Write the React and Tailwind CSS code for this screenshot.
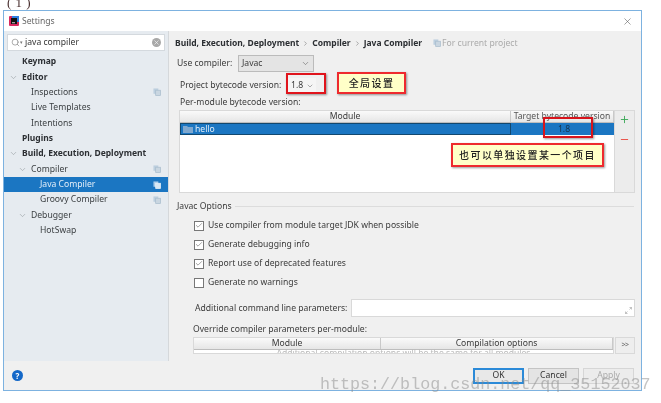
import { ChevronDown, X, Plus, Minus, Check, Search, ChevronRight } from 'lucide-react';

const tree = [
  { label: 'Keymap', bold: true, indent: 22 },
  { label: 'Editor', bold: true, indent: 22, arrow: 9 },
  { label: 'Inspections', indent: 31, copy: true },
  { label: 'Live Templates', indent: 31 },
  { label: 'Intentions', indent: 31 },
  { label: 'Plugins', bold: true, indent: 22 },
  { label: 'Build, Execution, Deployment', bold: true, indent: 22, arrow: 9 },
  { label: 'Compiler', indent: 31, arrow: 18, copy: true },
  { label: 'Java Compiler', indent: 40, copy: true, selected: true },
  { label: 'Groovy Compiler', indent: 40, copy: true },
  { label: 'Debugger', indent: 31, arrow: 18 },
  { label: 'HotSwap', indent: 40 },
];

const options = [
  { label: 'Use compiler from module target JDK when possible', checked: true },
  { label: 'Generate debugging info', checked: true },
  { label: 'Report use of deprecated features', checked: true },
  { label: 'Generate no warnings', checked: false },
];

function CopyIcon({ light }) {
  return (
    <svg width="8" height="8" viewBox="0 0 9 9" className="shrink-0">
      <rect x="0.5" y="0.5" width="5.5" height="6" fill={light ? '#a9cbe8' : '#bccfdf'} />
      <rect x="3" y="2.5" width="5.5" height="6" fill={light ? '#d7e8f5' : '#c9d6e1'} stroke={light ? '#e8f2fa' : '#a8bccd'} strokeWidth="0.8" />
    </svg>
  );
}

function TreeRow({ row }) {
  return (
    <div
      className={`relative flex h-[15.36px] items-center pr-[7px] ${row.selected ? 'bg-[#1b76c2] text-[#e3eef8]' : 'text-[#3c4043]'}`}
      style={{ paddingLeft: row.indent - 4 }}
    >
      {row.arrow && (
        <ChevronDown size={9} strokeWidth={1.4} className="absolute text-[#8b9196]" style={{ left: row.arrow - 4 }} />
      )}
      <span className={`flex-1 whitespace-nowrap ${row.bold ? 'text-[8.5px] font-bold text-[#2c2f33]' : ''}`}>{row.label}</span>
      {row.copy && <CopyIcon light={row.selected} />}
    </div>
  );
}

function OptionRow({ option }) {
  return (
    <div className="flex h-[19px] items-center gap-[4px]">
      <span className="flex h-[10px] w-[10px] items-center justify-center border border-[#777] bg-white">
        {option.checked && <Check size={9} strokeWidth={1.5} className="text-[#444]" />}
      </span>
      <span className="whitespace-nowrap">{option.label}</span>
    </div>
  );
}

function HeaderCell({ className, children }) {
  return (
    <div className={`flex items-center justify-center overflow-hidden whitespace-nowrap border-r border-[#c9c9c9] bg-gradient-to-b from-[#fafafa] to-[#e6e6e6] ${className}`}>
      {children}
    </div>
  );
}

export default function App() {
  return (
    <div className="relative h-[403px] w-[661px] overflow-hidden bg-white font-['Noto_Sans','Noto_Sans_CJK_SC',sans-serif] text-[8.6px] text-[#3a3a3a] blur-[0.4px]">
      <div className="h-[10px] overflow-hidden pl-[7px] font-['Liberation_Serif',serif] text-[13px] leading-[5px] tracking-[0.5px] text-[#4a3030]">( 1 )</div>

      {/* dialog */}
      <div className="ml-[3px] flex h-[381px] w-[639px] flex-col border border-[#7db2e0] bg-[#f0f0f0]">
        <div className="flex h-[20px] items-center bg-white pl-[5px] pr-[8px]">
          <svg width="10" height="10" viewBox="0 0 10 10" className="mr-[3px]">
            <rect width="10" height="10" rx="1" fill="#d8285f" />
            <rect x="3" y="0" width="7" height="6" fill="#2b7de0" />
            <rect x="2" y="2" width="6" height="6" fill="#111" />
            <rect x="3" y="6.4" width="3" height="0.8" fill="#fff" />
          </svg>
          <span className="flex-1 text-[#666]">Settings</span>
          <X size={11} strokeWidth={1.2} className="text-[#555]" />
        </div>

        <div className="flex min-h-0 flex-1">
          {/* sidebar */}
          <div className="flex w-[165px] shrink-0 flex-col border-r border-[#d5d8db] bg-[#e6ebf0]">
            <div className="mx-[3px] mt-[3px] flex h-[17px] items-center border border-[#d4d9de] bg-white px-[3px]">
              <Search size={9} strokeWidth={1.6} className="text-[#777]" />
              <span className="mr-[2px] text-[5px] text-[#777]">▾</span>
              <span className="flex-1 text-[#333]">java compiler</span>
              <span className="flex h-[9px] w-[9px] items-center justify-center rounded-full bg-[#a8a8a8]">
                <X size={7} strokeWidth={2} className="text-white" />
              </span>
            </div>
            <div className="mt-[3px]">
              {tree.map((row) => (
                <TreeRow key={row.label} row={row} />
              ))}
            </div>
          </div>

          {/* main */}
          <div className="flex min-w-0 flex-1 flex-col pl-[6px] pr-[6px]">
            <div className="flex h-[23px] items-center pt-[2px] text-[8.5px] font-bold text-[#2c2f33]">
              <span className="whitespace-nowrap">Build, Execution, Deployment</span>
              <ChevronRight size={7} className="mx-[3px] text-[#777]" />
              <span>Compiler</span>
              <ChevronRight size={7} className="mx-[3px] text-[#777]" />
              <span className="whitespace-nowrap">Java Compiler</span>
              <span className="ml-[11px] flex items-center gap-[1px] whitespace-nowrap text-[8.6px] font-normal text-[#aaa]">
                <CopyIcon />
                For current project
              </span>
            </div>

            <div className="flex h-[18px] items-center pl-[2px]">
              <span className="w-[61px]">Use compiler:</span>
              <div className="flex h-[17px] w-[76px] items-center justify-between border border-[#bbb] bg-[#e4e4e4] pl-[3px] pr-[3px]">
                <span>Javac</span>
                <ChevronDown size={9} strokeWidth={1.4} className="text-[#555]" />
              </div>
            </div>

            <div className="mt-[5px] flex h-[17px] items-center pl-[5px]">
              <span className="w-[108px] whitespace-nowrap">Project bytecode version:</span>
              <div className="flex h-[15px] w-[28px] items-center justify-between bg-[#f5f5f5] pl-[3px] pr-[2px]">
                <span>1.8</span>
                <ChevronDown size={8} strokeWidth={1.4} className="text-[#555]" />
              </div>
            </div>

            <div className="flex h-[16px] items-center pl-[5px]">Per-module bytecode version:</div>

            {/* module table */}
            <div className="ml-[4px] flex h-[83px] w-[456px] border border-[#d9d9d9]">
              <div className="flex min-w-0 flex-1 flex-col bg-white">
                <div className="flex h-[12px] border-b border-[#bdbdbd]">
                  <HeaderCell className="w-[331px]">Module</HeaderCell>
                  <HeaderCell className="flex-1 text-[#555]">Target bytecode version</HeaderCell>
                </div>
                <div className="flex h-[12px] bg-[#1b76c2] text-[#e3eef8]">
                  <div className="flex w-[331px] items-center gap-[2px] border border-[#12486f] pl-[2px]">
                    <svg width="10" height="8" viewBox="0 0 10 8">
                      <path d="M0 1h4l1 1h5v6H0z" fill="#7fa8cf" />
                    </svg>
                    hello
                  </div>
                  <div className="flex flex-1 items-center justify-center pl-[3px] text-[#16334d]">1.8</div>
                </div>
              </div>
              <div className="flex w-[20px] flex-col items-center border-l border-[#d9d9d9] bg-[#ececec] pt-[3px]">
                <Plus size={11} strokeWidth={2} className="text-[#3aa757]" />
                <Minus size={11} strokeWidth={2} className="mt-[9px] text-[#e8483e]" />
              </div>
            </div>

            {/* javac options */}
            <div className="mt-[7px] flex h-[12px] items-center gap-[3px] pl-[2px]">
              <span className="whitespace-nowrap">Javac Options</span>
              <div className="mr-[1px] h-px flex-1 bg-[#dcdcdc]" />
            </div>
            <div className="mt-[4px] pl-[19px]">
              {options.map((option) => (
                <OptionRow key={option.label} option={option} />
              ))}
            </div>

            <div className="mt-[7px] flex h-[18px] items-center pl-[20px]">
              <span className="w-[156px] whitespace-nowrap">Additional command line parameters:</span>
              <div className="relative h-[18px] flex-1 border border-[#d9d9d9] bg-white">
                <svg width="7" height="7" viewBox="0 0 7 7" className="absolute bottom-[2px] right-[2px] text-[#aaa]">
                  <path d="M0.5 6.5L2.5 4.5M6.5 0.5L4.5 2.5M4.5 0.5h2v2M0.5 4.5v2h2" stroke="currentColor" fill="none" strokeWidth="0.7" />
                </svg>
              </div>
            </div>

            <div className="mt-[4px] flex h-[16px] items-center pl-[18px]">Override compiler parameters per-module:</div>

            <div className="ml-[18px] flex h-[17px]">
              <div className="w-[421px] overflow-hidden border border-[#d9d9d9] bg-white">
                <div className="flex h-[12px] border-b border-[#bdbdbd]">
                  <HeaderCell className="w-[187px]">Module</HeaderCell>
                  <HeaderCell className="flex-1">Compilation options</HeaderCell>
                </div>
                <div className="whitespace-nowrap text-center leading-[7px] text-[#bbb]">Additional compilation options will be the same for all modules</div>
              </div>
              <div className="ml-[1px] flex w-[20px] items-center justify-center border border-[#d9d9d9] bg-[#eeeeee] text-[7px] tracking-[-0.5px] text-[#666]">{'>>'}</div>
            </div>
          </div>
        </div>

        {/* footer */}
        <div className="flex h-[29px] shrink-0 items-center bg-[#f0f0f0] pl-[8px] pr-[7px]">
          <span className="flex h-[11px] w-[11px] items-center justify-center rounded-full bg-[#1468c8] text-[8px] font-bold leading-none text-white">?</span>
          <div className="ml-auto flex gap-[4px]">
            <div className="flex h-[16px] w-[51px] items-center justify-center border-2 border-[#2b8ad8] bg-[#e8e8e8] text-[#333]">OK</div>
            <div className="flex h-[16px] w-[51px] items-center justify-center border border-[#c4c4c4] bg-[#e4e4e4] text-[#333]">Cancel</div>
            <div className="flex h-[16px] w-[51px] items-center justify-center border border-[#d6d6d6] bg-[#ececec] text-[#aaa]">Apply</div>
          </div>
        </div>
      </div>

      {/* annotations drawn over the screenshot */}
      <div className="absolute left-[286px] top-[73px] h-[21px] w-[40px] border-2 border-[#e0141c] shadow-[1px_1px_2px_rgba(0,0,0,0.4)]" />
      <div className="absolute left-[543px] top-[117px] h-[21px] w-[50px] border-2 border-[#d8141c] shadow-[1px_1px_2px_rgba(0,0,0,0.4)]" />
      <div className="absolute left-[337px] top-[72px] flex h-[22px] w-[69px] items-center justify-center whitespace-nowrap border-2 border-[#ee2a2e] bg-[#ffffc8] text-[10px] font-medium tracking-[1.4px] text-[#222] shadow-[1px_1px_2px_rgba(0,0,0,0.4)]">全局设置</div>
      <div className="absolute left-[451px] top-[143px] flex h-[24px] w-[153px] items-center justify-center whitespace-nowrap border-2 border-[#ee2a2e] bg-[#ffffc8] text-[10px] font-medium tracking-[1.4px] text-[#222] shadow-[1px_1px_2px_rgba(0,0,0,0.4)]">也可以单独设置某一个项目</div>

      {/* watermark */}
      <div className="absolute left-[320px] top-[372px] whitespace-nowrap font-['Liberation_Mono',monospace] text-[16.7px] text-[#8a8a8a]/50">https://blog.csdn.net/qq_35152037</div>
    </div>
  );
}
